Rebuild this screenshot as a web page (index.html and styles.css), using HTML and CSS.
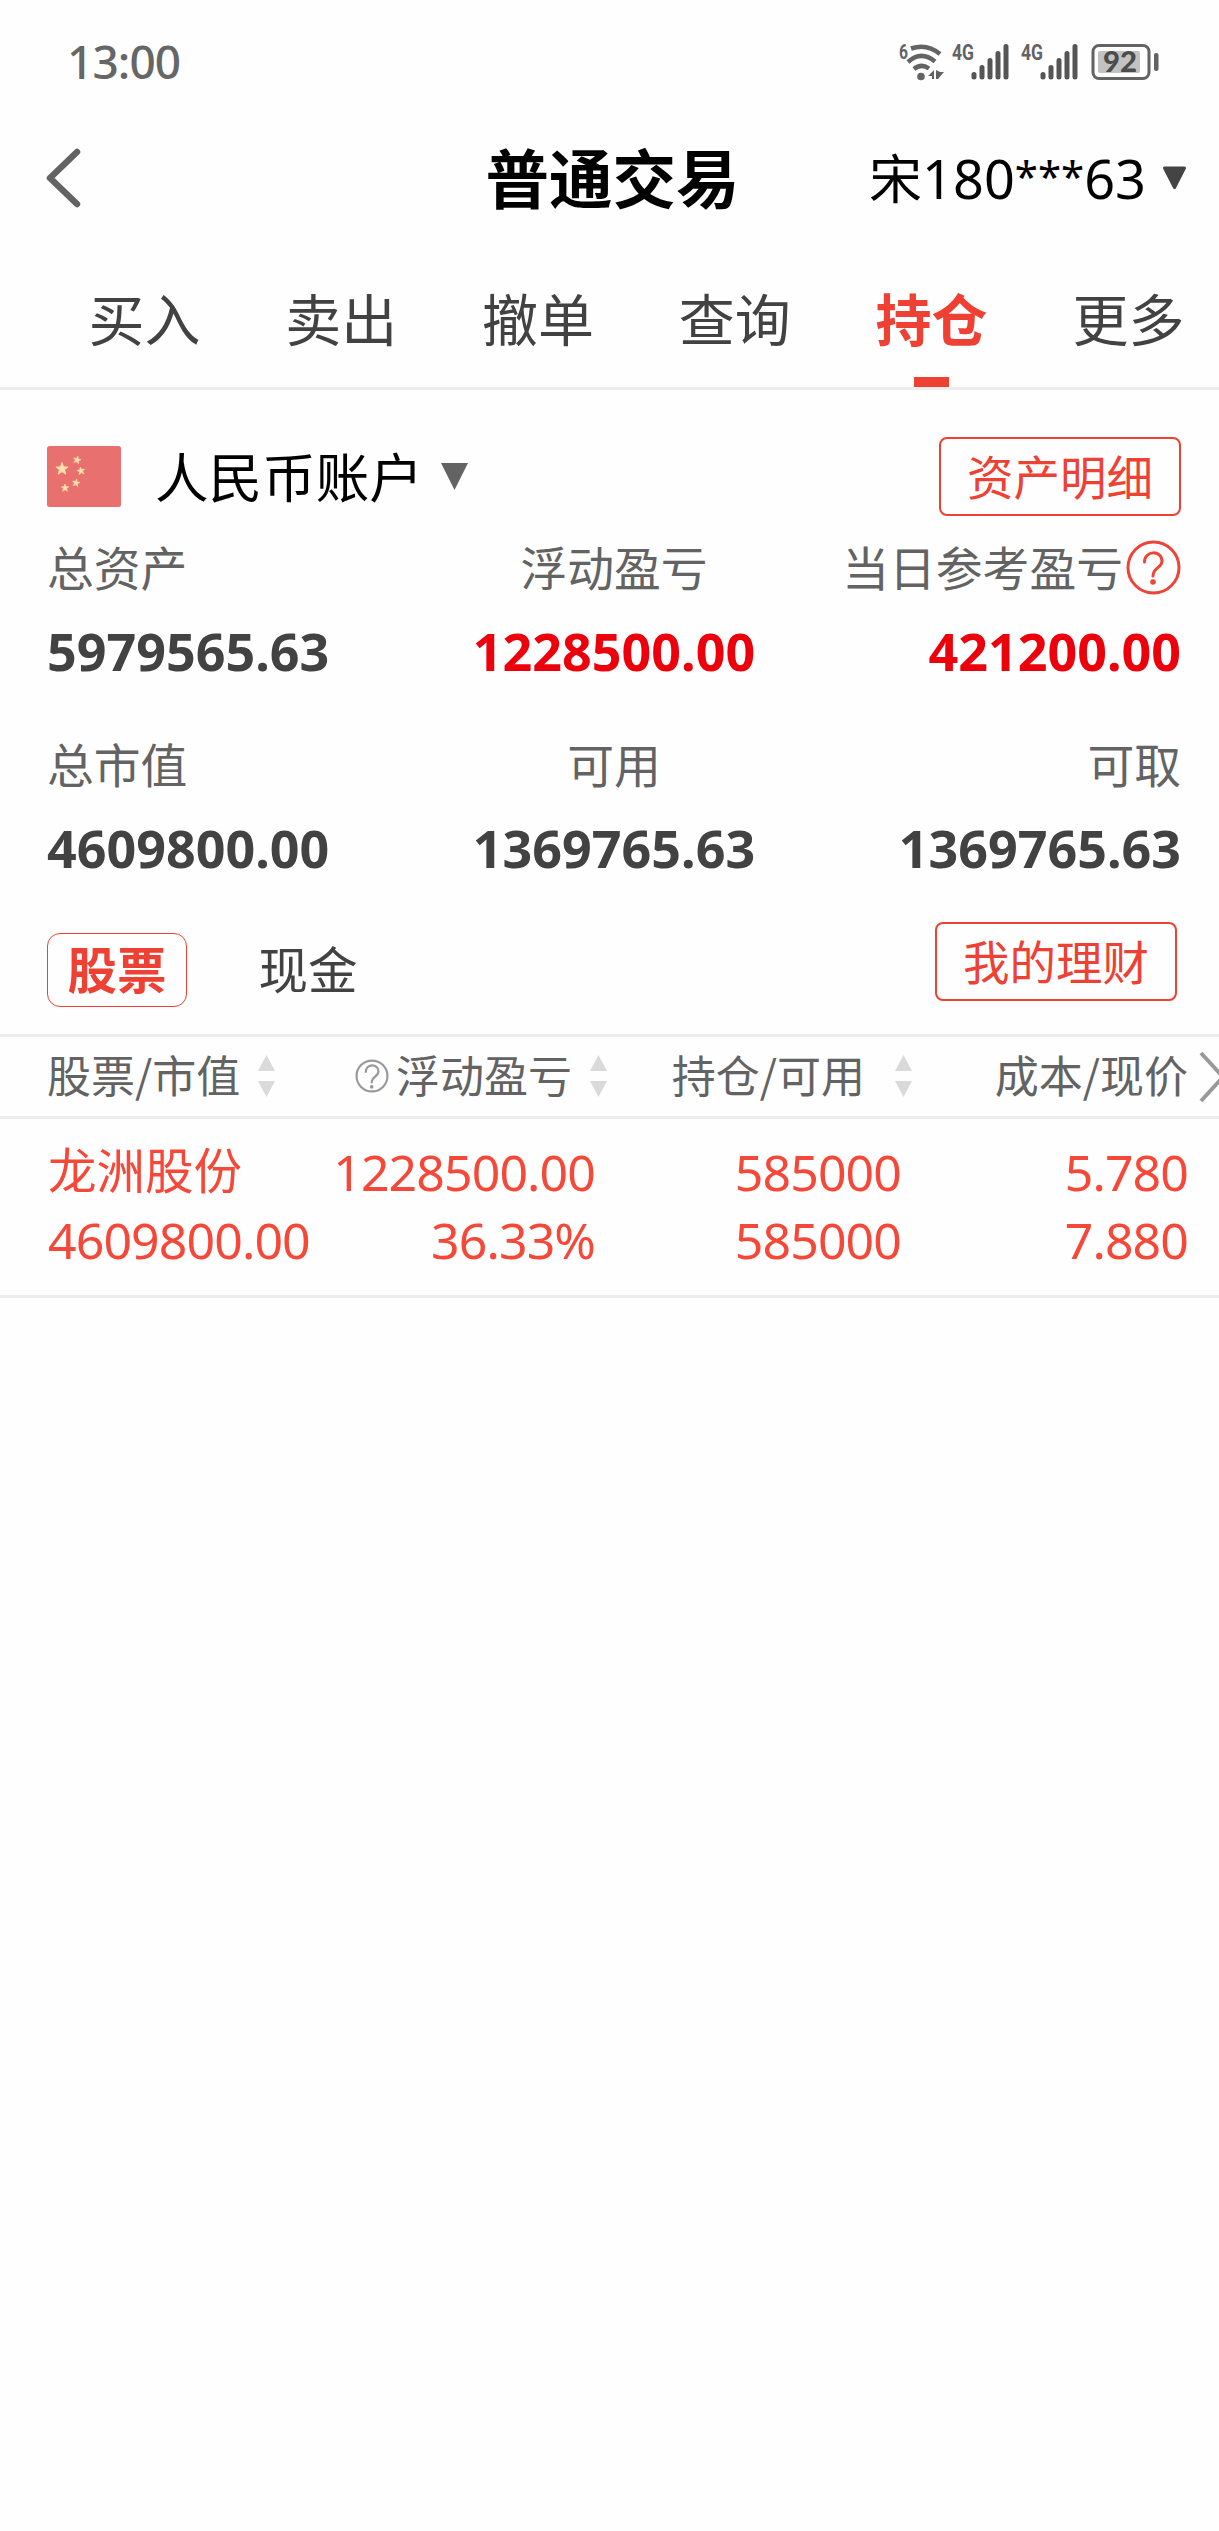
FILE: index.html
```html
<!DOCTYPE html>
<html lang="zh-CN">
<head>
  <meta charset="UTF-8">
  <meta name="viewport" content="width=device-width, initial-scale=1">
  <title>普通交易</title>
  <link rel="stylesheet" href="styles.css">
</head>
<body>
  <div class="status-bar">
    <span class="time">13:00</span>
    <svg class="status-icons" width="260" height="40" viewBox="0 0 260 40">
      <g class="status-text">
        <text x="0" y="17.5" font-size="20" textLength="9" lengthAdjust="spacingAndGlyphs">6</text>
        <text x="53" y="19" font-size="21.5" textLength="22" lengthAdjust="spacingAndGlyphs">4G</text>
        <text x="122" y="19" font-size="21.5" textLength="22" lengthAdjust="spacingAndGlyphs">4G</text>
      </g>
      <g fill="none" stroke="#636363" stroke-width="4.500">
        <path d="M12 7.500Q28 2 41 13"/>
        <path d="M9 21Q22 9 36 20.500"/>
        <path d="M15 28Q22 22 30 27.500"/>
      </g>
      <circle cx="22" cy="35.500" r="3.800" fill="#636363"/>
      <path d="M29 35L35 29V38H33V35ZM37 29V38H39L45 31H41Z" fill="#636363"/>
      <g stroke="#555" stroke-width="5" stroke-linecap="round">
        <path d="M75 33.500V36M83 26.500V36M91 19.500V36M99 12.500V36M107 5.500V36"/>
        <path d="M144 33.500V36M152 26.500V36M160 19.500V36M168 12.500V36M176 5.500V36"/>
      </g>
      <rect x="194" y="4.500" width="56" height="33" rx="6" fill="none" stroke="#636363" stroke-width="3"/>
      <rect x="199" y="10" width="42" height="22" rx="2" fill="#c2c2c2"/>
      <rect x="255" y="12" width="4.500" height="18" rx="2" fill="#636363"/>
      <text class="battery-text" x="204" y="31" font-size="28" textLength="34" lengthAdjust="spacingAndGlyphs">92</text>
    </svg>
  </div>

  <header class="header">
    <svg class="back" width="36" height="60" viewBox="0 0 36 60">
      <path d="M31 4L4 30L31 56" fill="none" stroke="#636363" stroke-width="6.500" stroke-linecap="round" stroke-linejoin="round"/>
    </svg>
    <h1>普通交易</h1>
    <div class="user">
      <span>宋</span><span class="user-num">180<span class="stars">***</span>63</span>
      <svg width="25" height="24" viewBox="0 0 25 24"><path d="M2.500 2H22.500L12.500 21.500Z" fill="#444" stroke="#444" stroke-width="3" stroke-linejoin="round"/></svg>
    </div>
  </header>

  <nav class="tabs">
    <a class="tab">买入</a>
    <a class="tab">卖出</a>
    <a class="tab">撤单</a>
    <a class="tab">查询</a>
    <a class="tab active">持仓</a>
    <a class="tab">更多</a>
  </nav>

  <section class="account">
    <div class="account-head">
      <svg class="flag" width="74" height="61" viewBox="0 0 74 61">
        <defs>
          <path id="star" d="M0 -10L2.500 -3.300L9.500 -3.100L3.900 1.300L5.900 8.100L0 4.100L-5.900 8.100L-3.900 1.300L-9.500 -3.100L-2.500 -3.300Z"/>
        </defs>
        <rect width="74" height="61" rx="2.500" fill="#e87170"/>
        <g fill="#fbe0a8" stroke="#fbe0a8" stroke-width="1.500">
          <use href="#star" transform="translate(15 23) scale(.64)"/>
          <use href="#star" transform="translate(30 14) scale(.4) rotate(15)"/>
          <use href="#star" transform="translate(34 25) scale(.4) rotate(-10)"/>
          <use href="#star" transform="translate(29 37) scale(.4) rotate(10)"/>
          <use href="#star" transform="translate(18 42) scale(.4)"/>
        </g>
      </svg>
      <span class="account-name">人民币账户</span>
      <svg width="27" height="27" viewBox="0 0 27 27"><path d="M0 0H27L13.500 27Z" fill="#636363"/></svg>
      <button class="btn">资产明细</button>
    </div>

    <div class="stats">
      <div class="stat">
        <div class="label">总资产</div>
        <div class="value">5979565.63</div>
      </div>
      <div class="stat">
        <div class="label">浮动盈亏</div>
        <div class="value red">1228500.00</div>
      </div>
      <div class="stat">
        <div class="label">当日参考盈亏<svg class="help" width="55" height="55" viewBox="0 0 55 55">
          <g fill="none" stroke="#ee4438" stroke-width="3">
            <circle cx="27.500" cy="27.500" r="25.500"/>
            <path d="M18.500 22C18.500 10 36 10 36 21C36 28 27 27.500 27 36" stroke-linecap="round"/>
          </g>
          <circle cx="27" cy="42" r="2.800" fill="#ee4438"/>
        </svg></div>
        <div class="value red">421200.00</div>
      </div>
      <div class="stat">
        <div class="label">总市值</div>
        <div class="value">4609800.00</div>
      </div>
      <div class="stat">
        <div class="label">可用</div>
        <div class="value">1369765.63</div>
      </div>
      <div class="stat">
        <div class="label">可取</div>
        <div class="value">1369765.63</div>
      </div>
    </div>

    <div class="types">
      <span class="type active">股票</span>
      <span class="type">现金</span>
      <button class="btn">我的理财</button>
    </div>
  </section>

  <section class="holdings">
    <div class="holdings-head">
      <div class="th">股票/市值
        <svg class="sort" width="17" height="42" viewBox="0 0 17 42"><path d="M8.500 0L17 16H0ZM0 26H17L8.500 42Z"/></svg>
      </div>
      <div class="th">
        <svg class="help-small" width="34" height="34" viewBox="0 0 55 55">
          <g fill="none" stroke="#999" stroke-width="3.500">
            <circle cx="27.500" cy="27.500" r="25"/>
            <path d="M17.500 21C17.500 7 38 7 38 20C38 29 27 28 27 38" stroke-linecap="round"/>
          </g>
          <circle cx="27" cy="45" r="3" fill="#999"/>
        </svg>浮动盈亏
        <svg class="sort" width="17" height="42" viewBox="0 0 17 42"><path d="M8.500 0L17 16H0ZM0 26H17L8.500 42Z"/></svg>
      </div>
      <div class="th">持仓/可用
        <svg class="sort wide" width="17" height="42" viewBox="0 0 17 42"><path d="M8.500 0L17 16H0ZM0 26H17L8.500 42Z"/></svg>
      </div>
      <div class="th">成本/现价</div>
      <svg class="next" width="20" height="52" viewBox="0 0 20 52"><path d="M2 2L24 26L2 50" fill="none" stroke="#999" stroke-width="4"/></svg>
    </div>

    <div class="holding">
      <div class="cell"><div class="name">龙洲股份</div><div>4609800.00</div></div>
      <div class="cell"><div>1228500.00</div><div>36.33%</div></div>
      <div class="cell"><div>585000</div><div>585000</div></div>
      <div class="cell"><div>5.780</div><div>7.880</div></div>
    </div>
  </section>
</body>
</html>
```
FILE: styles.css
```css
:root {
  --red: #ee4033;
  --row-red: #f54839;
  --dark: #424242;
  --gray: #636363;
  --line: #ededed;
}

* {
  box-sizing: border-box;
}

body {
  margin: 0;
  min-height: 2531px;
  background: #fefefe;
  color: var(--dark);
  font-family: "Noto Sans CJK SC", sans-serif;
  overflow-x: hidden;
}

svg {
  display: block;
  flex: none;
}

.status-bar {
  display: flex;
  justify-content: space-between;
  align-items: center;
  height: 122px;
  padding: 0 60px 0 67px;
}

.time {
  font: 500 46px/60px "Noto Sans", sans-serif;
  letter-spacing: -.9px;
  color: #666;
}

.status-text {
  font-family: Roboto, sans-serif;
  font-weight: bold;
  fill: #636363;
}

.battery-text {
  font-family: Lato, sans-serif;
  font-weight: 900;
  fill: #4c4c4c;
}

.header {
  display: grid;
  grid-template-columns: 1fr auto 1fr;
  align-items: center;
  height: 112px;
  padding: 0 32px 0 46px;
}

.header h1 {
  margin: 0;
  padding: 0 8px 7px 0;
  font-size: 63.5px;
  line-height: 90px;
  color: #000;
}

.user {
  display: flex;
  justify-content: flex-end;
  align-items: center;
  font-size: 53px;
  line-height: 70px;
  color: #000;
}

.user > span:first-child {
  padding-bottom: 4px;
}

.user-num {
  font-family: "Noto Sans", sans-serif;
  font-size: 54px;
}

.stars {
  font-size: 42px;
  line-height: 1;
  vertical-align: 7px;
}

.user svg {
  margin-left: 16px;
}

.tabs {
  display: grid;
  grid-template-columns: repeat(6, 196.8px);
  height: 156px;
  padding: 53px 0 0 46px;
  border-bottom: 3px solid var(--line);
}

.tab {
  display: flex;
  flex-direction: column;
  justify-content: space-between;
  align-items: center;
  font-size: 56px;
  line-height: 60px;
}

.tab.active {
  color: var(--red);
  font-weight: bold;
}

.tab.active::after {
  content: "";
  width: 35px;
  height: 10px;
  background: var(--red);
}

.account {
  padding: 47px 38px 0 47px;
}

.account-head {
  display: flex;
  align-items: center;
  height: 79px;
}

.account-name {
  margin: 0 18px 3px 34px;
  font-size: 53.6px;
  line-height: 76px;
  color: #000;
}

.btn {
  width: 242px;
  height: 79px;
  margin-left: auto;
  padding: 0 0 3px;
  border: 2px solid var(--red);
  border-radius: 8px;
  background: none;
  color: var(--red);
  font-family: inherit;
  font-size: 46.5px;
  line-height: 70px;
}

.stats {
  display: grid;
  grid-template-columns: 1fr auto 1fr;
  row-gap: 52px;
  margin-top: 20px;
}

.stat:nth-child(3n + 2) {
  text-align: center;
}

.stat:nth-child(3n) {
  text-align: right;
}

.label {
  height: 60px;
  margin-bottom: 25px;
  font-size: 46.8px;
  line-height: 60px;
  color: var(--gray);
}

.help {
  display: inline-block;
  margin: 4px 0 0 3px;
  vertical-align: top;
}

.value {
  font: bold 52px/60px "Noto Sans", sans-serif;
}

.value.red {
  color: #eb000b;
}

.types {
  display: flex;
  align-items: flex-start;
  height: 156px;
  margin-right: 4px;
  padding-top: 44px;
}

.type {
  width: 140px;
  height: 74px;
  margin: 11px 51px 0 0;
  border: 1px solid transparent;
  border-radius: 13px;
  font-size: 49.5px;
  line-height: 68px;
  text-align: center;
}

.type.active {
  border-color: var(--red);
  color: var(--red);
  font-weight: bold;
}

.holdings-head {
  display: grid;
  grid-template-columns: 278px 282px 305px 276px 1fr;
  align-items: center;
  height: 85px;
  padding-left: 47px;
  border: solid var(--line);
  border-width: 3px 0;
}

.th {
  display: flex;
  justify-content: flex-end;
  align-items: center;
  font-size: 44px;
  line-height: 74px;
  padding-bottom: 5px;
  color: var(--gray);
  white-space: nowrap;
}

.th:first-child {
  justify-content: flex-start;
}

.sort {
  margin: 4px 0 0 18px;
  fill: #dadada;
}

.sort.wide {
  margin-left: 30px;
}

.help-small {
  margin: 4px 7px 0 0;
}

.next {
  justify-self: end;
}

.holding {
  display: grid;
  grid-template-columns: 278px 269px 306px 287px;
  height: 179px;
  padding: 19px 0 0 48px;
  border-bottom: 3px solid var(--line);
  color: var(--row-red);
  font: 50px/68px "Noto Sans", sans-serif;
  letter-spacing: -.9px;
}

.cell {
  text-align: right;
}

.cell:first-child {
  text-align: left;
}

.name {
  height: 60px;
  margin-bottom: 8px;
  font: 48.5px/60px "Noto Sans CJK SC", sans-serif;
  letter-spacing: 0;
}
```
